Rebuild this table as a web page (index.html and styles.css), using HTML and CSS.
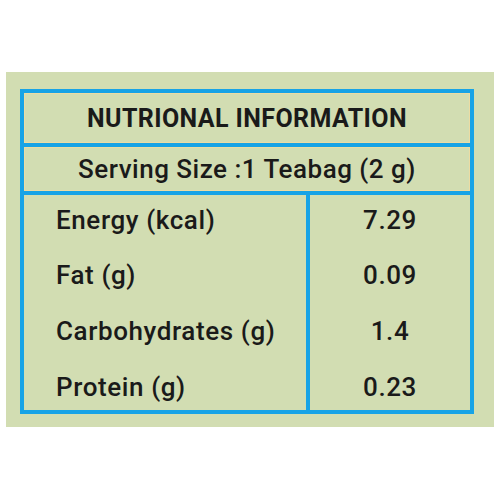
FILE: index.html
```html
<!DOCTYPE html>
<html lang="en">
<head>
    <meta charset="UTF-8">
    <meta name="viewport" content="width=device-width, initial-scale=1.0">
    <title>Nutritional Information</title>
    <link rel="stylesheet" href="styles.css">
</head>
<body>

<div class="panel">
    <table class="nutrition">
        <colgroup>
            <col class="label-col">
            <col>
        </colgroup>
        <thead>
            <tr class="title-row">
                <th colspan="2">NUTRIONAL INFORMATION</th>
            </tr>
            <tr class="serving-row">
                <th colspan="2">Serving Size :1 Teabag (2 g)</th>
            </tr>
        </thead>
        <tbody>
            <tr>
                <td class="label">Energy (kcal)</td>
                <td class="value">7.29</td>
            </tr>
            <tr>
                <td class="label">Fat (g)</td>
                <td class="value">0.09</td>
            </tr>
            <tr>
                <td class="label">Carbohydrates (g)</td>
                <td class="value">1.4</td>
            </tr>
            <tr>
                <td class="label">Protein (g)</td>
                <td class="value">0.23</td>
            </tr>
        </tbody>
    </table>
</div>

</body>
</html>
```

FILE: styles.css
```css
body {
    margin: 0;
    background-color: #fff;
    font-family: Roboto, "Liberation Sans", sans-serif;
    color: #1a1a1a;
}
.panel {
    margin: 72px 6px 0 6px;
    height: 355px;
    padding: 17px 20px 0 14px;
    box-sizing: border-box;
    background-color: #d2ddb2;
}
.nutrition {
    width: 454px;
    table-layout: fixed;
    border-collapse: collapse;
    border: 4px solid #17a3e6;
}
.label-col {
    width: 286px;
}
.nutrition th, .nutrition td {
    border: 4px solid #17a3e6;
    padding: 0;
}
.nutrition th {
    box-shadow: inset 0 0 0 1px #ecdca4;
}
.nutrition tbody td {
    border-top: none;
    border-bottom: none;
    vertical-align: top;
    padding-top: 10px;
    line-height: 30px;
    font-size: 26px;
    font-weight: 500;
    letter-spacing: 0.6px;
}
.title-row th {
    height: 50px;
    font-size: 25px;
    font-weight: 700;
    letter-spacing: 0.4px;
    text-align: center;
}
.serving-row th {
    height: 44px;
    font-size: 26px;
    font-weight: 500;
    letter-spacing: 0.5px;
    text-align: center;
}
.nutrition tbody tr {
    height: 56px;
}
.nutrition tbody tr:first-child {
    height: 57px;
}
.nutrition tbody tr:nth-child(3) {
    height: 56px;
}
.nutrition tbody tr:last-child {
    height: 50px;
}
.nutrition td.label {
    padding-left: 32px;
}
.nutrition td.value {
    text-align: center;
}
```
